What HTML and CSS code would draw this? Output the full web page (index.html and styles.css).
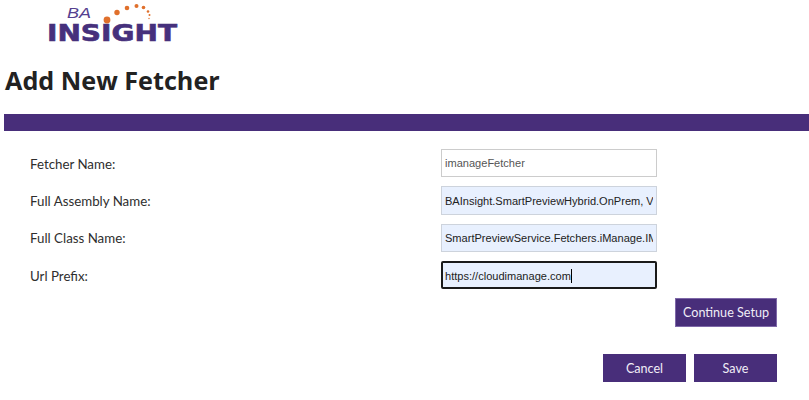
FILE: index.html
```html
<!DOCTYPE html>
<html lang="en">
<head>
<meta charset="utf-8">
<title>Add New Fetcher</title>
<link rel="stylesheet" href="styles.css">
</head>
<body>
<header class="logo-wrap">
  <svg class="logo" width="132" height="38" viewBox="0 0 132 38" xmlns="http://www.w3.org/2000/svg" aria-label="BA Insight">
    <text class="logo-ba" x="20" y="13" textLength="24" lengthAdjust="spacingAndGlyphs">BA</text>
    <text class="logo-insight" x="0" y="36" textLength="130" lengthAdjust="spacingAndGlyphs">INSIGHT</text>
    <g fill="#e0702c">
      <circle cx="60" cy="15" r="3.4"/>
      <circle cx="70" cy="7.5" r="2.7"/>
      <circle cx="80" cy="3" r="2.3"/>
      <circle cx="89.5" cy="1" r="2"/>
      <circle cx="96.5" cy="2.5" r="1.8"/>
      <circle cx="101" cy="6.5" r="1.3"/>
      <circle cx="102.5" cy="10" r="1"/>
      <circle cx="102" cy="13.5" r="0.7"/>
    </g>
  </svg>
</header>
<h1 class="title">Add New Fetcher</h1>
<div class="bar"></div>
<form class="form">
  <label class="label" for="f1">Fetcher Name:</label>
  <div class="field"><input id="f1" class="input input-plain" type="text" value="imanageFetcher"></div>
  <label class="label" for="f2">Full Assembly Name:</label>
  <div class="field"><input id="f2" class="input input-filled" type="text" value="BAInsight.SmartPreviewHybrid.OnPrem, Version=1.0.0.0"></div>
  <label class="label" for="f3">Full Class Name:</label>
  <div class="field"><input id="f3" class="input input-filled" type="text" value="SmartPreviewService.Fetchers.iManage.IManageFetcher"></div>
  <label class="label" for="f4">Url Prefix:</label>
  <div class="field"><input id="f4" class="input input-filled input-focus" type="text" value="https://cloudimanage.com"><span class="caret"></span></div>
</form>
<div class="actions actions-setup">
  <button class="btn btn-setup" type="button">Continue Setup</button>
</div>
<div class="actions actions-main">
  <button class="btn btn-main" type="button">Cancel</button>
  <button class="btn btn-main" type="button">Save</button>
</div>
</body>
</html>
```
FILE: styles.css
```css
* { box-sizing: border-box; }
html, body { margin: 0; padding: 0; background: #fff; overflow: hidden; }
body {
  width: 809px;
  height: 400px;
  font-family: "Lato", "Open Sans", sans-serif;
  color: #252525;
}
.logo-wrap { height: 43px; padding: 5px 0 0 47px; }
.logo { display: block; overflow: visible; }
.logo-ba {
  font-family: "Liberation Sans", sans-serif;
  font-style: italic;
  font-size: 14px;
  fill: #55408f;
}
.logo-insight {
  font-family: "DejaVu Sans", sans-serif;
  font-weight: 700;
  font-size: 23px;
  fill: #46307c;
  stroke: #46307c;
  stroke-width: 0.6px;
}
.title {
  margin: 0;
  padding: 0 0 0 5px;
  height: 71px;
  font-family: "Open Sans", sans-serif;
  font-size: 25.2px;
  line-height: 75px;
  font-weight: 700;
  color: #222;
}
.bar { margin-left: 4px; height: 17px; background: #482e7a; }
.form {
  display: grid;
  grid-template-columns: 411px 216px;
  grid-auto-rows: 28.33px;
  row-gap: 9px;
  align-items: center;
  padding: 18px 0 0 30px;
}
.label { font-size: 13.3px; line-height: 20px; color: #2e2e2e; padding-top: 1px; }
.field { position: relative; height: 100%; }
.input {
  display: block;
  width: 100%;
  height: 100%;
  margin: 0;
  padding: 1px 3px 0;
  font-family: "Liberation Sans", sans-serif;
  font-size: 11.05px;
  outline: none;
  border-radius: 0;
  border: 1px solid #ccc;
  color: #333;
}
.input-plain { background: #fff; color: #555; padding-top: 0; }
.input-filled { background: #e8f0fe; border-color: #cdd3dc; color: #222; }
.input-focus { border: 2px solid #1a1a1a; border-radius: 2px; padding: 1px 2px 0; }
.caret {
  position: absolute;
  left: 130px;
  top: 8px;
  width: 1px;
  height: 14px;
  background: #000;
}
.actions { display: flex; justify-content: flex-end; gap: 8px; padding-right: 32px; }
.actions-setup { padding-top: 9px; }
.actions-main { padding-top: 27px; }
.btn {
  margin: 0;
  border: 1px solid #7e68a8;
  border-radius: 0;
  background: #482e7a;
  color: #f0edf6;
  font-family: "Lato", "Open Sans", sans-serif;
  font-size: 12.6px;
  cursor: pointer;
  padding: 0;
}
.btn-setup { width: 102px; height: 29px; }
.btn-main { width: 83px; height: 28px; border-color: #482e7a; }
```
